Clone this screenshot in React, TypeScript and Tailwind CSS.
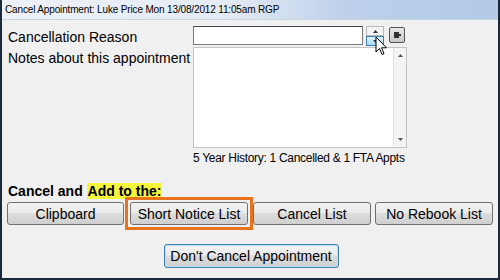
import React from "react";

const btn =
  "h-[23px] rounded-[3px] border border-[#707070] bg-[linear-gradient(#f2f2f2_0%,#ebebeb_45%,#dddddd_50%,#cfcfcf_100%)] text-[14px] text-black flex items-center justify-center leading-none";

export default function App() {
  return (
    <div
      className="relative w-[500px] h-[280px] bg-[#f0f0f0] overflow-hidden"
      style={{ fontFamily: '"Liberation Sans", Arial, sans-serif' }}
    >
      <div className="absolute inset-0 border-l-[2px] border-r-[2px] border-b-[2px] border-[#1a2a3a] pointer-events-none z-10" />
      {/* title bar */}
      <div className="h-[20px] flex items-center pl-[5px] border-b border-[#c8d4e2] bg-[linear-gradient(90deg,#eef2f7_0%,#e4ebf4_45%,#bcd0ea_70%,#b3cae8_100%)]">
        <span className="text-[10px] tracking-[-0.15px] text-black leading-none">
          Cancel Appointment: Luke Price Mon 13/08/2012 11:05am RGP
        </span>
      </div>

      <div className="pl-[8px] pr-[7px]">
        {/* row 1 */}
        <div className="flex items-start mt-[6px]">
          <div className="w-[185px] text-[14px] leading-none pt-[4px]">Cancellation Reason</div>
          <div className="w-[170px] h-[19px] bg-white border border-[#7a7a7a] border-t-[#3c4656]" />
          <div className="ml-[3px] flex flex-col w-[18px]">
            <div className="h-[10px] border border-[#b8b8b8] bg-[#f4f4f4] flex items-center justify-center">
              <svg width="5" height="3" viewBox="0 0 5 3"><path d="M0 3 L2.5 0 L5 3Z" fill="#333" /></svg>
            </div>
            <div className="h-[10px] border border-[#3c7fb1] bg-[linear-gradient(#dff1fc,#a9d9f5)] flex items-center justify-center">
              <svg width="5" height="3" viewBox="0 0 5 3"><path d="M0 0 L2.5 3 L5 0Z" fill="#1b3f5c" /></svg>
            </div>
          </div>
          <div className="ml-[5px] mt-[1px] w-[16px] h-[16px] border border-[#555] rounded-[2px] bg-[linear-gradient(#e8e8e8,#c8c8c8)] flex items-center justify-center">
            <svg width="9" height="8" viewBox="0 0 9 8">
              <rect x="1" y="1" width="5" height="6" fill="#333" />
              <rect x="6" y="3" width="2" height="2" fill="#333" />
            </svg>
          </div>
        </div>

        {/* row 2 */}
        <div className="flex items-start mt-[1px]">
          <div className="w-[185px] text-[14px] leading-none pt-[4px]">Notes about this appointment</div>
          <div className="w-[214px] h-[101px] bg-white border border-[#c4c4c4] flex justify-end">
            <div className="w-[13px] h-full bg-[#f4f4f4] border-l border-[#e2e2e2] flex flex-col justify-between items-center py-[6px]">
              <svg width="5" height="3" viewBox="0 0 5 3"><path d="M0 3 L2.5 0 L5 3Z" fill="#555" /></svg>
              <svg width="5" height="3" viewBox="0 0 5 3"><path d="M0 0 L2.5 3 L5 0Z" fill="#555" /></svg>
            </div>
          </div>
        </div>
        <div className="ml-[185px] mt-[4px] text-[12px] leading-none tracking-[-0.3px]">
          5 Year History: 1 Cancelled &amp; 1 FTA Appts
        </div>

        {/* cancel and add */}
        <div className="mt-[19px] text-[14px] font-bold leading-none flex items-center">
          <span>Cancel and&nbsp;</span>
          <span className="bg-[#f5f53c] px-[1px] py-[1px]">Add to the:</span>
        </div>

        <div className="mt-[3px] flex items-center ml-[-1px]">
          <div className={`${btn} w-[117px]`}>Clipboard</div>
          <div className="border-[3px] border-[#e8731e] p-[2px] my-[-5px] ml-[1px]">
            <div className={`${btn} w-[118px]`}>Short Notice List</div>
          </div>
          <div className={`${btn} w-[118px] ml-[0px]`}>Cancel List</div>
          <div className={`${btn} w-[118px] ml-[4px]`}>No Rebook List</div>
        </div>

        <div className="mt-[19px] flex justify-center pl-[1px]">
          <div className="h-[24px] w-[175px] rounded-[3px] border border-[#3c7fb1] shadow-[inset_0_0_0_1px_#b6e2fa] bg-[linear-gradient(#f2f2f2_0%,#ebebeb_45%,#dddddd_50%,#cfcfcf_100%)] text-[14px] flex items-center justify-center leading-none">
            Don't Cancel Appointment
          </div>
        </div>
      </div>

      {/* mouse cursor */}
      <svg className="absolute left-[375px] top-[36px] z-20" width="13" height="20" viewBox="0 0 13 20">
        <path d="M1 1 L1 16 L4.5 12.5 L7 18.5 L9 17.6 L6.6 11.8 L11.5 11.8 Z" fill="white" stroke="black" strokeWidth="1" strokeLinejoin="round" />
      </svg>
    </div>
  );
}
